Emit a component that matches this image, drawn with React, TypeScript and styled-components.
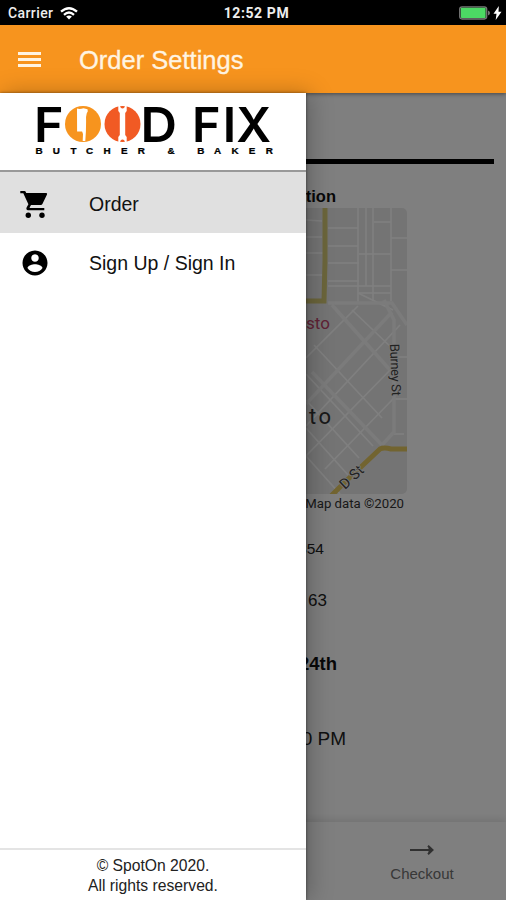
import React from "react";
import styled, { createGlobalStyle } from "styled-components";

const Global = createGlobalStyle`
  * { box-sizing: border-box; }
  html, body { margin: 0; padding: 0; }
  body { font-family: "Liberation Sans", Arial, sans-serif; color: #000; }
`;

const Screen = styled.div`
  width: 506px;
  height: 900px;
  display: flex;
  flex-direction: column;
  overflow: hidden;
  background: #fff;
`;

const StatusBar = styled.div`
  height: 25px;
  flex: none;
  display: grid;
  grid-template-columns: 1fr auto 1fr;
  align-items: center;
  padding: 1px 4px 0 8px;
  background: #000;
  color: #eee;
  font: 500 14px/20px Roboto, sans-serif;
`;

const StatusGroup = styled.div<{ $end?: boolean }>`
  display: flex;
  align-items: center;
  gap: ${(p) => (p.$end ? 3 : 7)}px;
  justify-content: ${(p) => (p.$end ? "flex-end" : "flex-start")};
  letter-spacing: 0.4px;
`;

const Clock = styled.span`
  font-weight: 700;
  font-size: 14px;
  letter-spacing: 0.6px;
  padding-left: 3px;
`;

const AppBar = styled.header`
  height: 68px;
  flex: none;
  display: flex;
  align-items: center;
  padding: 2px 18px 0;
  background: #f7941e;
  color: #fff;
  position: relative;
  z-index: 2;
  box-shadow: 0 1px 4px rgba(0, 0, 0, 0.45);
`;

const MenuButton = styled.button`
  display: flex;
  flex-direction: column;
  gap: 3px;
  width: 23px;
  margin: -2px 38px 0 0;
  padding: 0;
  border: 0;
  background: none;
`;

const MenuBar = styled.span`
  height: 3px;
  background: #fff4e2;
`;

const Title = styled.h1`
  margin: 0;
  font-size: 25.5px;
  font-weight: 400;
  line-height: 32px;
  color: #fff4e2;
  -webkit-text-stroke: 0.3px #fff4e2;
`;

const Stage = styled.div`
  flex: 1;
  min-height: 0;
  position: relative;
  display: flex;
`;

const Page = styled.main`
  flex: 1;
  display: flex;
  flex-direction: column;
  align-items: flex-end;
  background: #fff;
`;

const Rule = styled.div`
  width: 482px;
  height: 5px;
  margin: 66px 12px 0 0;
  background: #000;
`;

const Line = styled.div<{ $top: number; $right: number; $size?: number; $bold?: boolean; $color?: string }>`
  margin-top: ${(p) => p.$top}px;
  margin-right: ${(p) => p.$right}px;
  height: 20px;
  line-height: 20px;
  white-space: nowrap;
  font-size: ${(p) => p.$size ?? 17}px;
  font-weight: ${(p) => (p.$bold ? 700 : 400)};
  color: ${(p) => p.$color ?? "#222"};
`;

const MapBox = styled.div`
  width: 101px;
  height: 286px;
  margin: 2px 99px 0 0;
  border-radius: 0 5px 5px 0;
  overflow: hidden;
  svg { display: block; }
`;

const MapCredit = styled.div`
  margin: 0 102px 0 0;
  font: 400 13.2px/20px Roboto, sans-serif;
  color: #333;
`;

const BottomBar = styled.footer`
  margin-top: auto;
  width: 100%;
  height: 78px;
  display: flex;
  justify-content: flex-end;
  background: #fff;
  box-shadow: 0 -2px 8px rgba(0, 0, 0, 0.12);
`;

const CheckoutTab = styled.div`
  width: 168px;
  display: flex;
  flex-direction: column;
  align-items: center;
  padding-top: 23px;
  color: #707070;
  font-size: 15px;
  line-height: 20px;
  svg { margin-bottom: 9px; }
`;

const Scrim = styled.div`
  position: absolute;
  inset: 0;
  background: rgba(0, 0, 0, 0.5);
`;

const Drawer = styled.aside`
  position: absolute;
  inset: 0 auto 0 0;
  z-index: 3;
  width: 306px;
  display: flex;
  flex-direction: column;
  background: #fff;
  box-shadow: 0 0 3px rgba(0, 0, 0, 0.5), 4px 0 22px rgba(0, 0, 0, 0.25);
`;

const Brand = styled.div`
  height: 79px;
  flex: none;
  border-bottom: 2px solid #999;
  svg { display: block; }
`;

const NavItem = styled.a<{ $active?: boolean }>`
  height: ${(p) => (p.$active ? 61 : 59)}px;
  flex: none;
  display: flex;
  align-items: center;
  gap: 39px;
  padding: ${(p) => (p.$active ? 4 : 1)}px 20px 0;
  background: ${(p) => (p.$active ? "#e0e0e0" : "#fff")};
  font-size: 19.5px;
  color: #111;
  svg { display: block; flex: none; }
`;

const Legal = styled.div`
  height: 52px;
  margin-top: auto;
  border-top: 2px solid #e4e4e4;
  padding: 6px 0 0;
  text-align: center;
  font-size: 15.7px;
  line-height: 20px;
  color: #222;
`;

const Wifi = () => (
  <svg width="18" height="13" viewBox="0 0 18 13" fill="none" stroke="#fff" strokeWidth="2.3">
    <path d="M1 4.7Q9-2.3 17 4.7M4 7.8Q9 3.3 14 7.8" />
    <path d="M9 12.6L6.1 9.6Q9 7.3 11.9 9.6Z" fill="#fff" stroke="none" />
  </svg>
);

const Battery = () => (
  <svg width="31" height="14" viewBox="0 0 31 14">
    <rect x=".7" y=".8" width="27" height="12.2" rx="2.4" fill="#111" stroke="#777" strokeWidth="1.3" />
    <rect x="1.8" y="1.8" width="24.8" height="10.2" rx="1" fill="#4cd964" />
    <path d="M29 4.5q2 .8 2 2.5t-2 2.5z" fill="#777" />
  </svg>
);

const Bolt = () => (
  <svg width="9" height="14" viewBox="0 0 9 14">
    <path d="M5.8 0L.5 7.7h3L2.7 14 8.5 5.7h-3z" fill="#fff" />
  </svg>
);

const Logo = () => (
  <svg width="306" height="77" viewBox="0 93 306 77">
    <g fontSize="48.5" fontFamily="Inter, sans-serif" fontWeight="600">
      <text x="34" y="141.5" textLength="29.5" lengthAdjust="spacingAndGlyphs">F</text>
      <text x="140.5" y="141.5" textLength="36.5" lengthAdjust="spacingAndGlyphs">D</text>
      <text y="141.5" x="192 222.8 236.2">FIX</text>
    </g>
    <circle cx="83" cy="124" r="18" fill="#f7941e" />
    <path d="M77 108.6q3 .8 6.500-.3l4 1q1 1.700-.800 4.200-1 3-.6 8l-.2 10-.6 9.500h-2.600l.300-7-.9-2.500h-5z" fill="#fff" />
    <circle cx="122.500" cy="124" r="18" fill="#f15a24" />
    <path d="M118.300 105.500h1.700q.4 3 2.500 3t2.500-3h1.700v5.500l-1.500 2v22l1.500 2v5.500H125q-.4-3-2.500-3t-2.500 3h-1.700v-5.500l1.500-2v-22l-1.500-2z" fill="#fff" />
    <text
      transform="scale(1.1 1)"
      fontFamily="Liberation Sans, Arial, sans-serif"
      fontWeight="700"
      y="154.3"
      fontSize="9"
      stroke="#000"
      strokeWidth=".25"
      x="32.300 48 64 78.200 94.200 110 125.300 139 152.200 165 179.300 194.600 210.500 226.200 241.600"
    >
      BUTCHER &amp; BAKER
    </text>
  </svg>
);

const Cart = () => (
  <svg width="30" height="30" viewBox="20 189.5 30 30">
    <path d="M20.300 190.400h4.200q.9 0 1.200.9l.5 1.200H46.300q1.200.2.700 1.400L42.400 203.400q-.5 1-1.600 1.100H31l-1.400 2.600q0 .4.5.4H44.300v2.200H28q-2.300-.4-1.400-2.700l1.800-3.300L23.300 192.700h-3z" />
    <circle cx="28.300" cy="214.700" r="2.700" />
    <circle cx="42" cy="214.700" r="2.700" />
  </svg>
);

const Account = () => (
  <svg width="30" height="30" viewBox="0 0 24 24">
    <path d="M12 2C6.480 2 2 6.480 2 12s4.480 10 10 10 10-4.480 10-10S17.520 2 12 2zm0 3c1.660 0 3 1.340 3 3s-1.340 3-3 3-3-1.340-3-3 1.340-3 3-3zm0 14.200c-2.500 0-4.710-1.280-6-3.220.03-1.990 4-3.080 6-3.080 1.990 0 5.970 1.090 6 3.080-1.290 1.940-3.500 3.220-6 3.220z" />
  </svg>
);

const StreetMap = () => (
  <svg width="101" height="286" viewBox="306 208 101 286" fill="none">
    <path d="M306 208h101v286H306z" fill="#e9e9e9" />
    <g stroke="#fff" strokeWidth="1.6">
      <path d="M306 220l16 1M306 237h16M306 253h18M306 275h18M328 228h30M328 246h30M328 263h31M328 281h31M328 286h63" />
      <path d="M358 208v94M366 208v78M373 208v93M391 208v93M374 222h17M359 254h32M391 238h16M391 270h16M359 293h32" />
      <path d="M358 306l-52 52M400 325l-94 101M394 366l-88 90M394 398l-69 71" />
      <path d="M352 310l42 40M306 374l67 72M306 400l53 58M306 428l42 47M306 456l34 38M314 345l68 73" />
      <path d="M395 357h12M395 399h12M394 434h10M358 293l35 17" />
    </g>
    <g stroke="#f6f6f6" strokeWidth="3.5">
      <path d="M328 303h64l15 22M332 305l58 65M312 372l70 73M384 300l10 20v112l-12 13M392 312l-86 92" />
    </g>
    <path d="M325 208v53l-1 40h-18" stroke="#d6ca76" strokeWidth="5" />
    <path d="M331 496l13-13 36-34q4-2 11 0h17" stroke="#e5c860" strokeWidth="5" />
    <g fontFamily="Roboto, sans-serif">
      <text x="306" y="329" fontSize="17" fill="#c0446c">sto</text>
      <text x="309" y="424" fontSize="22" letterSpacing="2.6" fill="#333">to</text>
      <g fill="#444" stroke="#eee" strokeWidth="2" paintOrder="stroke" fontSize="13">
        <text transform="translate(390 344) rotate(88)" textLength="52">Burney St</text>
        <text transform="translate(345 490) rotate(-43)" fontSize="14.5" textLength="27">D St</text>
      </g>
    </g>
  </svg>
);

const Arrow = () => (
  <svg width="24" height="10" viewBox="0 0 24 10" fill="none" stroke="#606060" strokeWidth="2">
    <path d="M0 5h22" />
    <path d="M18.5 1.5L23 5l-4.5 3.5z" fill="#606060" stroke="none" />
    <path d="M18 .8L22.500 5l-4.500 4.200" />
  </svg>
);

export default function App() {
  return (
    <Screen>
      <Global />
      <StatusBar>
        <StatusGroup>
          <span>Carrier</span>
          <Wifi />
        </StatusGroup>
        <Clock>12:52 PM</Clock>
        <StatusGroup $end>
          <Battery />
          <Bolt />
        </StatusGroup>
      </StatusBar>
      <AppBar>
        <MenuButton aria-label="Menu">
          <MenuBar />
          <MenuBar />
          <MenuBar />
        </MenuButton>
        <Title>Order Settings</Title>
      </AppBar>
      <Stage>
        <Page>
          <Rule />
          <Line $top={22} $right={170} $size={16.5} $bold $color="#111">Location</Line>
          <MapBox>
            <StreetMap />
          </MapBox>
          <MapCredit>Map data ©2020</MapCredit>
          <Line $top={25} $right={182} $size={15.5}>95354</Line>
          <Line $top={32} $right={179}>63</Line>
          <Line $top={43} $right={169} $size={18.5} $bold $color="#111">24th</Line>
          <Line $top={55} $right={160} $size={19}>00 PM</Line>
          <BottomBar>
            <CheckoutTab>
              <Arrow />
              Checkout
            </CheckoutTab>
          </BottomBar>
        </Page>
        <Scrim />
        <Drawer>
          <Brand>
            <Logo />
          </Brand>
          <NavItem $active>
            <Cart />
            Order
          </NavItem>
          <NavItem>
            <Account />
            Sign Up / Sign In
          </NavItem>
          <Legal>
            © SpotOn 2020.
            <br />
            All rights reserved.
          </Legal>
        </Drawer>
      </Stage>
    </Screen>
  );
}
